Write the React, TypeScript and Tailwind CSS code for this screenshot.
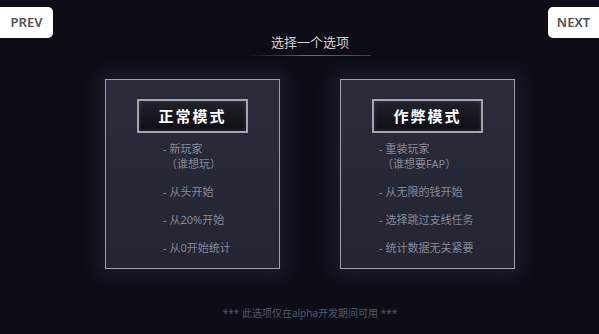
const modes = [
  {
    title: "正常模式",
    pad: "pl-[57px]",
    items: [["- 新玩家", "（谁想玩）"], ["- 从头开始"], ["- 从20%开始"], ["- 从0开始统计"]],
  },
  {
    title: "作弊模式",
    pad: "pl-[38px]",
    items: [["- 重装玩家", "（谁想要FAP）"], ["- 从无限的钱开始"], ["- 选择跳过支线任务"], ["- 统计数据无关紧要"]],
  },
];

const font = { fontFamily: '"Noto Sans", "Noto Sans CJK SC", sans-serif' };

const ModeCard = ({ title, pad, items }: { title: string; pad: string; items: string[][] }) => (
  <div className="w-[175px] h-[190px] border border-[#9da0aa] bg-gradient-to-b from-[#2a2c3b] to-[#232533] shadow-[0_0_18px_6px_rgba(40,44,64,0.55)] flex flex-col items-center pt-[19px]">
    <div className="w-[111px] h-[34px] border-2 border-[#a3a5ad] bg-gradient-to-b from-[#20212c] to-[#0d0e15] flex items-center justify-center text-white text-[15px] font-bold tracking-[2px] shadow-[inset_0_0_4px_rgba(255,255,255,0.15)]">
      {title}
    </div>
    <div className={`self-start ${pad} mt-[9px] flex flex-col gap-[14px] text-[11px] leading-[14px] text-[#868896]`}>
      {items.map((lines, i) => (
        <div key={i} className="flex flex-col gap-[1px]">
          {lines.map((l, j) => (
            <span key={j} className={j > 0 ? "ml-[3px]" : ""}>{l}</span>
          ))}
        </div>
      ))}
    </div>
  </div>
);

export default function App() {
  return (
    <div className="w-[599px] h-[334px] bg-[#0c0d16] relative overflow-hidden" style={font}>
      <button className="absolute left-0 top-[7px] w-[53px] h-[31px] bg-white rounded-r-[5px] text-[#4f4f55] text-[13px] font-semibold">
        PREV
      </button>
      <button className="absolute right-0 top-[7px] w-[51px] h-[31px] bg-white rounded-l-[5px] text-[#4f4f55] text-[13px] font-semibold">
        NEXT
      </button>
      <div className="flex flex-col items-center pt-[33px] pl-[21px]">
        <div className="text-[13px] leading-[18px] text-[#d0d1d6]">选择一个选项</div>
        <div className="mt-[4px] w-[122px] h-px bg-gradient-to-r from-transparent via-[#6c6e78] to-[#3a3c46]" />
        <div className="mt-[23px] flex gap-[60px]">
          {modes.map((m) => (
            <ModeCard key={m.title} title={m.title} pad={m.pad} items={m.items} />
          ))}
        </div>
        <div className="mt-[37px] text-[10px] text-[#55576a]">*** 此选项仅在alpha开发期间可用 ***</div>
      </div>
    </div>
  );
}
